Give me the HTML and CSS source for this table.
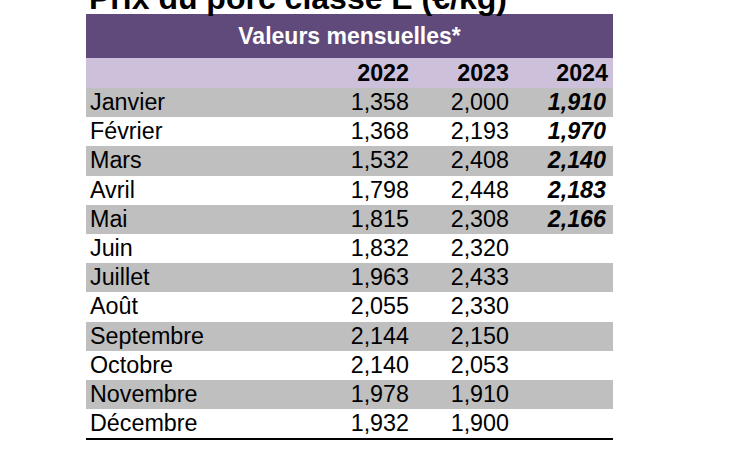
FILE: index.html
```html
<!DOCTYPE html>
<html lang="fr">
<head>
<meta charset="utf-8">
<title>Prix du porc classe E</title>
<link rel="stylesheet" href="styles.css">
</head>
<body>
<div class="sheet">
  <h1 class="title">Prix du porc classe E (€/kg)</h1>
  <table class="prices">
    <colgroup>
      <col class="c-month">
      <col class="c-year">
      <col class="c-year">
      <col class="c-year c-last">
    </colgroup>
    <thead>
      <tr class="band"><th colspan="4">Valeurs mensuelles*</th></tr>
      <tr class="years"><th></th><th>2022</th><th>2023</th><th class="last">2024</th></tr>
    </thead>
    <tbody>
      <tr class="alt"><td>Janvier</td><td>1,358</td><td>2,000</td><td class="last cur">1,910</td></tr>
      <tr><td>Février</td><td>1,368</td><td>2,193</td><td class="last cur">1,970</td></tr>
      <tr class="alt"><td>Mars</td><td>1,532</td><td>2,408</td><td class="last cur">2,140</td></tr>
      <tr><td>Avril</td><td>1,798</td><td>2,448</td><td class="last cur">2,183</td></tr>
      <tr class="alt"><td>Mai</td><td>1,815</td><td>2,308</td><td class="last cur">2,166</td></tr>
      <tr><td>Juin</td><td>1,832</td><td>2,320</td><td class="last"></td></tr>
      <tr class="alt"><td>Juillet</td><td>1,963</td><td>2,433</td><td class="last"></td></tr>
      <tr><td>Août</td><td>2,055</td><td>2,330</td><td class="last"></td></tr>
      <tr class="alt"><td>Septembre</td><td>2,144</td><td>2,150</td><td class="last"></td></tr>
      <tr><td>Octobre</td><td>2,140</td><td>2,053</td><td class="last"></td></tr>
      <tr class="alt"><td>Novembre</td><td>1,978</td><td>1,910</td><td class="last"></td></tr>
      <tr class="end"><td>Décembre</td><td>1,932</td><td>1,900</td><td class="last"></td></tr>
    </tbody>
  </table>
</div>
</body>
</html>
```

FILE: styles.css
```css
html, body {
  margin: 0;
  padding: 0;
  background: #ffffff;
}

body {
  font-family: "Liberation Sans", Arial, sans-serif;
  color: #000000;
  overflow: hidden;
}

.sheet {
  padding-left: 86px;
}

.title {
  margin: -18px 0 0 0;
  padding-left: 3px;
  height: 32px;
  font-size: 32px;
  line-height: 32px;
  font-weight: bold;
  white-space: nowrap;
}

.prices {
  width: 527px;
  border-collapse: collapse;
  border-spacing: 0;
  font-size: 23.3px;
  table-layout: fixed;
}

.c-month { width: 227px; }
.c-year { width: 100px; }
.c-last { width: 100px; }

.prices th,
.prices td {
  padding: 0 4px;
  text-align: right;
  white-space: nowrap;
}

.prices td:first-child,
.prices th:first-child {
  text-align: left;
}

.prices .last {
  padding-right: 5px;
}

.prices .cur {
  padding-right: 7px;
  font-weight: bold;
  font-style: italic;
}

.band th {
  height: 44px;
  background: #604a7b;
  color: #ffffff;
  font-size: 23px;
  font-weight: bold;
  text-align: center !important;
  vertical-align: middle;
  padding: 0;
}

.years th {
  height: 30px;
  background: #ccc0da;
  font-weight: bold;
  vertical-align: middle;
}

tbody td {
  height: 29.2px;
  line-height: 29px;
  vertical-align: middle;
}

tbody tr.alt td {
  background: #bfbfbf;
}

tbody tr.end td {
  border-bottom: 2px solid #000000;
}
```
